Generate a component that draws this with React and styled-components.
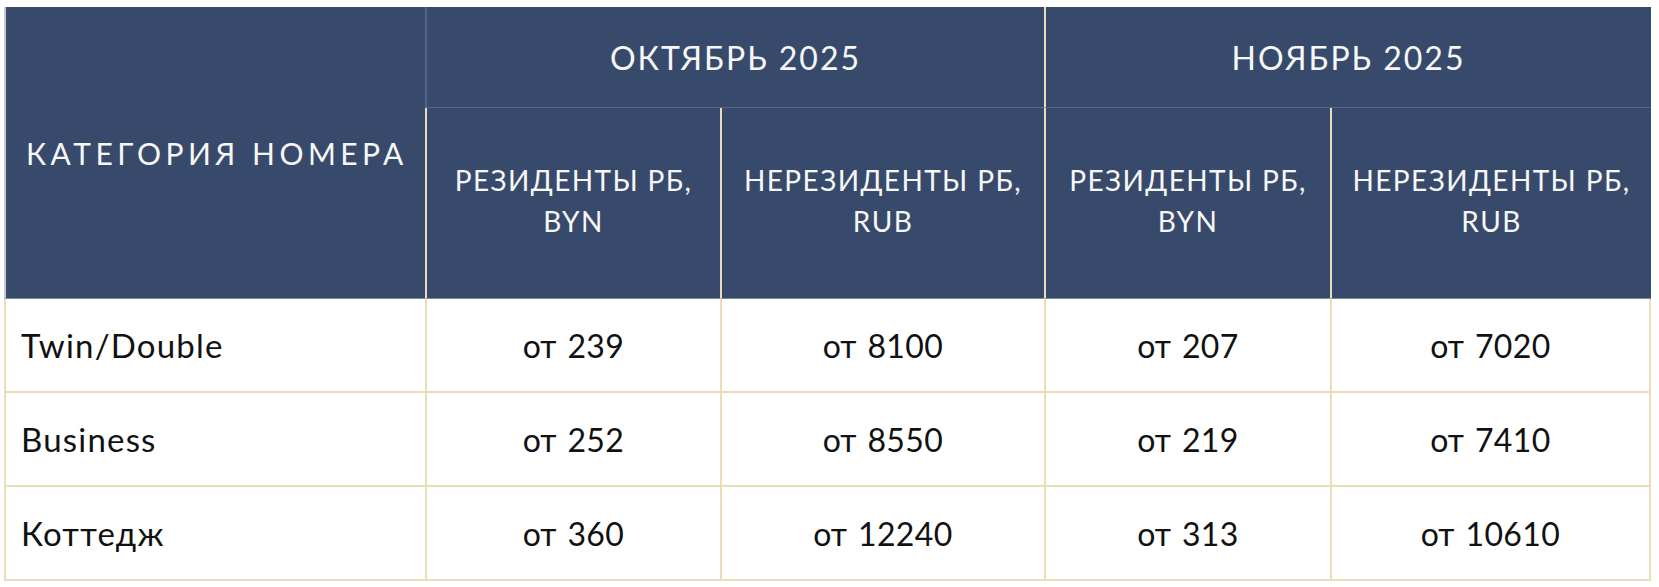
import React from 'react';
import styled, { createGlobalStyle } from 'styled-components';

const GlobalStyle = createGlobalStyle`
  html, body {
    margin: 0;
    padding: 0;
    background: #ffffff;
  }
  body {
    font-family: Lato, "Open Sans", "Liberation Sans", sans-serif;
  }
`;

const NAVY = '#384a6b';
const BEIGE = '#ecdcb9';

const Page = styled.div`
  padding: 7px 0 0 4px;
`;

const PriceTable = styled.table`
  width: 1647px;
  table-layout: fixed;
  border-collapse: separate;
  border-spacing: 0;
  font-family: Lato, "Open Sans", sans-serif;
`;

const Col = styled.col`
  width: ${props => props.$w}px;
`;

const HeadCell = styled.th`
  background: ${NAVY};
  color: #f7f7f7;
  font-weight: 400;
  text-align: center;
  vertical-align: middle;
  padding: 0;
  border-left: 2px solid ${props => props.$leftColor || BEIGE};
  border-bottom: 1px solid ${props => props.$bottomColor || '#7f8ba3'};
`;

const CategoryHead = styled(HeadCell)`
  font-size: 30px;
  letter-spacing: 4.5px;
  text-align: left;
  padding-left: 20px;
  white-space: nowrap;
`;

const MonthHead = styled(HeadCell)`
  height: 100px;
  font-size: 32px;
  letter-spacing: 2px;
`;

const SubHead = styled(HeadCell)`
  height: 186px;
  font-size: 28px;
  line-height: 41px;
  letter-spacing: 1.4px;
  padding-bottom: 4px;
`;

const Cell = styled.td`
  height: 92px;
  padding: 0;
  font-size: 32px;
  color: #111111;
  text-align: center;
  vertical-align: middle;
  border-left: 2px solid ${BEIGE};
  border-bottom: 2px solid ${BEIGE};
  border-right: ${props => (props.$last ? `2px solid ${BEIGE}` : 'none')};
`;

const NameCell = styled(Cell)`
  text-align: left;
  padding-left: 15px;
  font-size: 33px;
  letter-spacing: 1.2px;
`;

const Prefix = styled.span`
  margin-right: 11px;
`;

const Amount = styled.span`
  letter-spacing: 0.4px;
`;

const columns = [421, 295, 324, 286, 321];

const rows = [
  { name: 'Twin/Double', prices: [239, 8100, 207, 7020] },
  { name: 'Business', prices: [252, 8550, 219, 7410] },
  { name: 'Коттедж', prices: [360, 12240, 313, 10610] },
];

const months = [
  { title: 'ОКТЯБРЬ 2025', left: '#52638a' },
  { title: 'НОЯБРЬ 2025', left: BEIGE },
];

export default function App() {
  return (
    <Page>
      <GlobalStyle />
      <PriceTable>
        <colgroup>
          {columns.map((w, i) => (
            <Col key={i} $w={w} />
          ))}
        </colgroup>
        <thead>
          <tr>
            <CategoryHead rowSpan={2} $leftColor="#c4c9d2">КАТЕГОРИЯ НОМЕРА</CategoryHead>
            {months.map(m => (
              <MonthHead key={m.title} colSpan={2} $leftColor={m.left} $bottomColor="#56678a">
                {m.title}
              </MonthHead>
            ))}
          </tr>
          <tr>
            {months.map(m => (
              <React.Fragment key={m.title}>
                <SubHead>РЕЗИДЕНТЫ РБ,<br />BYN</SubHead>
                <SubHead>НЕРЕЗИДЕНТЫ РБ,<br />RUB</SubHead>
              </React.Fragment>
            ))}
          </tr>
        </thead>
        <tbody>
          {rows.map(r => (
            <tr key={r.name}>
              <NameCell>{r.name}</NameCell>
              {r.prices.map((p, i) => (
                <Cell key={i} $last={i === r.prices.length - 1}>
                  <Prefix>от</Prefix>
                  <Amount>{p}</Amount>
                </Cell>
              ))}
            </tr>
          ))}
        </tbody>
      </PriceTable>
    </Page>
  );
}
